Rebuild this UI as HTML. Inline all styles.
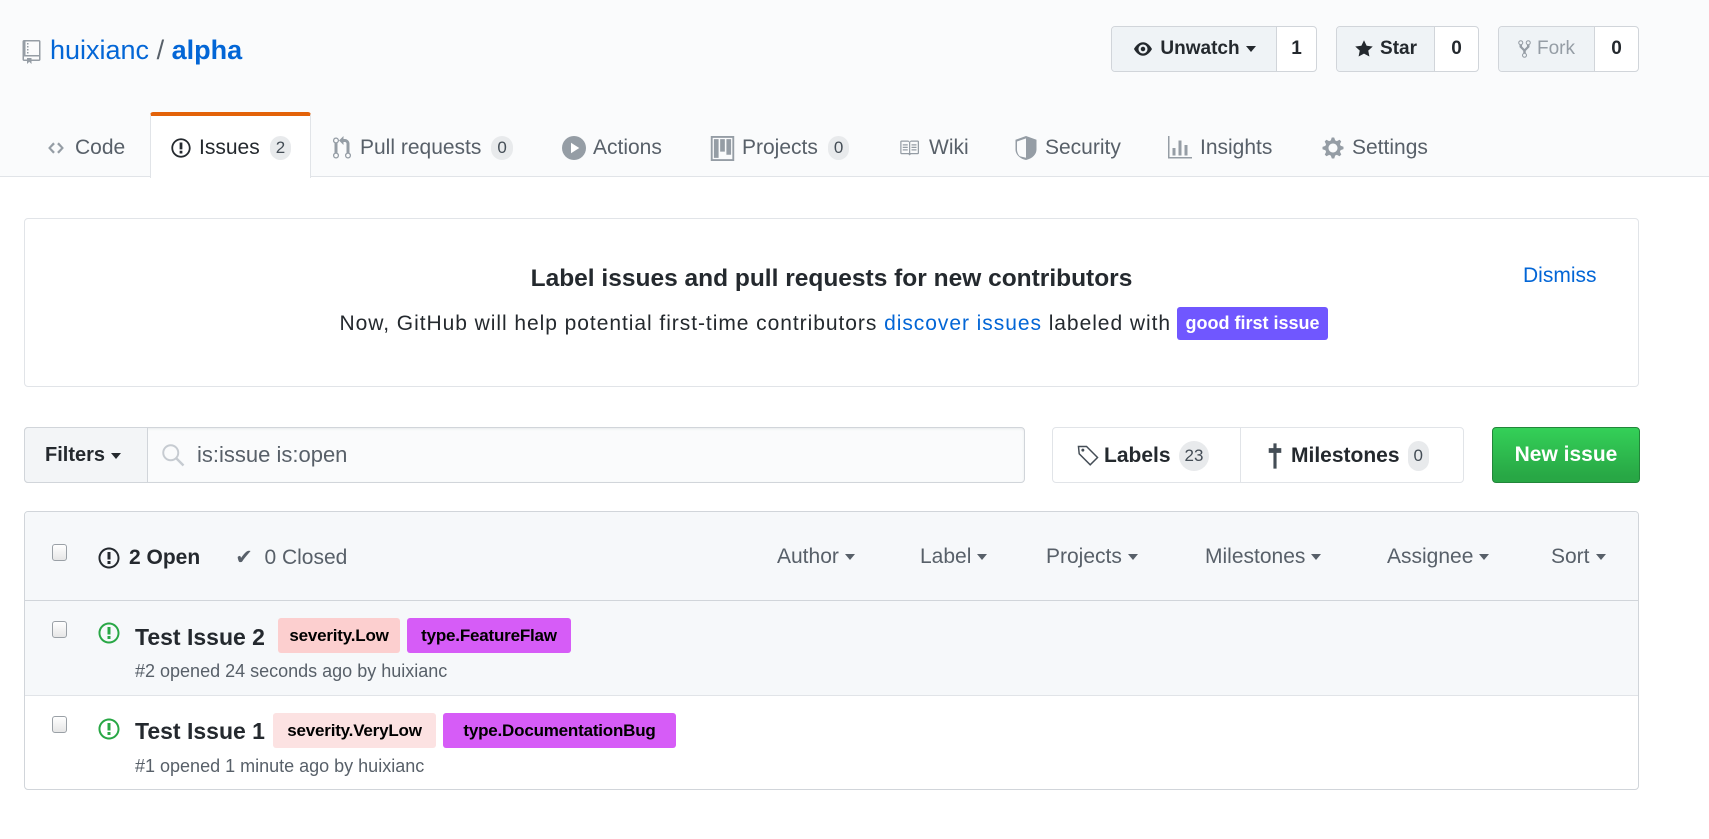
<!DOCTYPE html>
<html><head><meta charset="utf-8"><style>
*{box-sizing:border-box;margin:0;padding:0}
body{width:1709px;height:839px;background:#fff;font-family:"Liberation Sans",sans-serif;color:#24292e;position:relative;overflow:hidden}
.a{position:absolute;white-space:nowrap}
.hdr{position:absolute;left:0;top:0;width:1709px;height:177px;background:#fafbfc;border-bottom:1px solid #e1e4e8}
.btn{position:absolute;top:26px;height:46px;border:1px solid #d1d5da;border-radius:4px;background:#fff;display:flex;overflow:hidden}
.btn .l{background:#eff3f6;border-right:1px solid #d1d5da;display:flex;align-items:center;justify-content:center;font-weight:bold;font-size:19px;gap:6px}
.btn .r{flex:1;display:flex;align-items:center;justify-content:center;font-weight:bold;font-size:19px}
.tab{position:absolute;top:135px;height:26px;line-height:26px;font-size:21px;color:#586069;display:flex;align-items:center;gap:7px}
.cnt{display:inline-block;background:#e8eaec;border-radius:12px;font-size:17px;padding:0 6px;height:24px;line-height:24px;color:#444d56;margin-left:3px}
.lbl{position:absolute;height:35px;line-height:35px;font-size:17px;font-weight:bold;padding:0 6px;border-radius:3px;color:#000;text-align:center;letter-spacing:-0.2px}
.mt{font-size:18px;color:#586069}
.chk{position:absolute;width:15px;height:17px;border:1px solid #9aa0a6;border-radius:3px;background:linear-gradient(#fff,#e6e6e6)}
.caret{display:inline-block;width:0;height:0;border-left:5px solid transparent;border-right:5px solid transparent;border-top:6px solid currentColor;margin-left:6px;vertical-align:middle}
.flt{position:absolute;top:544px;font-size:21px;color:#586069;line-height:26px}
</style></head><body>
<div class="hdr"></div>
<svg class="a" style="left:22px;top:40px" width="19" height="24" viewBox="0 0 12 16"><path fill="#959da5" d="M4 9H3V8h1v1zm0-3H3v1h1V6zm0-2H3v1h1V4zm0-2H3v1h1V2zm8-1v12c0 .55-.45 1-1 1H6v2l-1.5-1.5L3 16v-2H1c-.55 0-1-.45-1-1V1c0-.55.45-1 1-1h10c.55 0 1 .45 1 1zm-1 10H1v2h2v-1h3v1h5v-2zm0-10H2v9h9V1z"/></svg>
<div class="a" style="left:50px;top:34px;font-size:27px;line-height:32px;color:#0366d6">huixianc <span style="color:#586069">/</span> <b>alpha</b></div>
<div class="btn" style="left:1111px;width:206px"><div class="l" style="width:165px"><svg width="22" height="18" viewBox="0 0 16 16"><path fill="#24292e" d="M8.06 2C3 2 0 8 0 8s3 6 8.06 6C13 14 16 8 16 8s-3-6-7.94-6zM8 12c-2.2 0-4-1.78-4-4 0-2.2 1.8-4 4-4 2.22 0 4 1.8 4 4 0 2.22-1.780 4-4 4zm2-4c0 1.11-.89 2-2 2-1.11 0-2-.89-2-2 0-1.11.89-2 2-2 1.11 0 2 .89 2 2z"/></svg>Unwatch<span class="caret" style="margin-left:0"></span></div><div class="r">1</div></div>
<div class="btn" style="left:1336px;width:143px"><div class="l" style="width:98px"><svg width="20" height="20" viewBox="0 0 14 16"><path fill="#24292e" d="M14 6l-4.9-.64L7 1 4.9 5.36 0 6l3.6 3.26L2.67 14 7 11.67 11.33 14l-.93-4.74L14 6z"/></svg>Star</div><div class="r">0</div></div>
<div class="btn" style="left:1498px;width:141px"><div class="l" style="width:96px;color:#959da5;font-weight:normal"><svg width="13" height="20" viewBox="0 0 10 16"><path fill="#959da5" d="M8 1a1.993 1.993 0 0 0-1 3.72V6L5 8 3 6V4.72A1.993 1.993 0 0 0 2 1a1.993 1.993 0 0 0-1 3.72V6.5l3 3v1.78A1.993 1.993 0 0 0 5 15a1.993 1.993 0 0 0 1-3.72V9.5l3-3V4.72A1.993 1.993 0 0 0 8 1zM2 4.2C1.34 4.2.8 3.65.8 3c0-.65.55-1.2 1.2-1.2.65 0 1.2.55 1.2 1.2 0 .65-.55 1.2-1.2 1.2zm3 10c-.66 0-1.2-.55-1.2-1.2 0-.65.55-1.2 1.2-1.2.65 0 1.2.55 1.2 1.2 0 .65-.55 1.2-1.2 1.2zm3-10c-.66 0-1.2-.55-1.2-1.2 0-.65.55-1.2 1.2-1.2.65 0 1.2.55 1.2 1.2 0 .65-.55 1.2-1.2 1.2z"/></svg>Fork</div><div class="r">0</div></div>
<div class="a" style="left:150px;top:112px;width:161px;height:66px;background:#fff;border:1px solid #e1e4e8;border-top:4px solid #e36209;border-bottom:none;border-radius:3px 3px 0 0"></div>
<div class="tab" style="left:44px"><svg width="24" height="18" viewBox="0 0 14 16"><path fill="#959da5" d="M9.5 3L8 4.5 11.5 8 8 11.5 9.5 13 14 8 9.5 3zm-5 0L0 8l4.5 5L6 11.5 2.5 8 6 4.5 4.5 3z"/></svg>Code</div>
<div class="tab" style="left:170px;color:#24292e"><svg width="22" height="22" viewBox="0 0 14 16"><path fill="#24292e" d="M7 2.3c3.14 0 5.7 2.56 5.7 5.7s-2.56 5.7-5.7 5.7A5.71 5.71 0 0 1 1.3 8c0-3.14 2.56-5.7 5.7-5.7zM7 1C3.14 1 0 4.14 0 8s3.14 7 7 7 7-3.14 7-7-3.14-7-7-7zm1 3H6v5h2V4zm0 6H6v2h2v-2z"/></svg>Issues<span class="cnt">2</span></div>
<div class="tab" style="left:331px"><svg width="22" height="24" viewBox="0 0 12 16"><path fill="#959da5" d="M11 11.28V5c-.03-.78-.34-1.47-.94-2.06C9.46 2.35 8.780 2.03 8 2H7V0L4 3l3 3V4h1c.27.02.48.11.69.31.21.2.3.42.31.69v6.28A1.993 1.993 0 0 0 10 15a1.993 1.993 0 0 0 1-3.72zm-1 2.92c-.66 0-1.2-.55-1.2-1.2 0-.65.55-1.2 1.2-1.2.65 0 1.2.55 1.2 1.2 0 .65-.55 1.2-1.2 1.2zM4 3c0-1.11-.89-2-2-2a1.993 1.993 0 0 0-1 3.72v6.56A1.993 1.993 0 0 0 2 15a1.993 1.993 0 0 0 1-3.72V4.72c.59-.34 1-.98 1-1.72zm-.8 10c0 .66-.55 1.2-1.2 1.2-.65 0-1.2-.55-1.2-1.2 0-.65.55-1.2 1.2-1.2.65 0 1.2.55 1.2 1.2zM2 4.2C1.34 4.2.8 3.65.8 3c0-.65.55-1.2 1.2-1.2.65 0 1.2.55 1.2 1.2 0 .65-.55 1.2-1.2 1.2z"/></svg>Pull requests<span class="cnt">0</span></div>
<div class="tab" style="left:562px"><svg width="24" height="24" viewBox="0 0 16 16"><circle cx="8" cy="8" r="8" fill="#959da5"/><path fill="#fff" d="M6 4.5v7l5.5-3.5z"/></svg>Actions</div>
<div class="tab" style="left:710px"><svg width="25" height="25" viewBox="0 0 15 16"><rect x="0.6" y="0.6" width="13.8" height="14.8" fill="none" stroke="#959da5" stroke-width="1.2"/><rect x="2" y="2" width="3" height="12" fill="#959da5"/><rect x="6" y="2" width="3" height="8" fill="#959da5"/><rect x="10" y="2" width="3" height="10" fill="#959da5"/></svg>Projects<span class="cnt">0</span></div>
<div class="tab" style="left:896px"><svg width="26" height="20" viewBox="0 0 16 16"><path fill="#959da5" d="M3 5h4v1H3V5zm0 3h4V7H3v1zm0 2h4V9H3v1zm11-5h-4v1h4V5zm0 2h-4v1h4V7zm0 2h-4v1h4V9zm2-6v9c0 .55-.45 1-1 1H9.5l-1 1-1-1H2c-.55 0-1-.45-1-1V3c0-.55.45-1 1-1h5.5l1 1 1-1H15c.55 0 1 .45 1 1zm-8 .5L7.5 3H2v9h6V3.5zm7-.5H9.5l-.5.5V12h6V3z"/></svg>Wiki</div>
<div class="tab" style="left:1014px"><svg width="24" height="28" viewBox="0 0 16 16"><path fill="#959da5" d="M4 13.5c-1-.6-2-2.6-2-4.5V3.7L8 1.6v12.9c-1.2-.3-3-.6-4-1zM8 0L1 2.5v6.5c0 3 2.5 6 7 7 4.5-1 7-4 7-7V2.5L8 0z"/></svg>Security</div>
<div class="tab" style="left:1167px"><svg width="26" height="24" viewBox="0 0 16 16"><path fill="#959da5" d="M16 14v1H0V0h1v14h15zM5 13H3V8h2v5zm4 0H7V3h2v10zm4 0h-2V6h2v7z"/></svg>Insights</div>
<div class="tab" style="left:1321px"><svg width="24" height="24" viewBox="0 0 14 16"><path fill="#959da5" d="M14 8.77v-1.6l-1.94-.64-.45-1.09.88-1.84-1.13-1.130-1.81.91-1.09-.45-.69-1.92h-1.6l-.63 1.94-1.11.45-1.84-.88-1.13 1.13.91 1.81-.45 1.09L0 7.23v1.59l1.94.64.45 1.09-.88 1.84 1.13 1.13 1.81-.91 1.09.45.69 1.92h1.59l.63-1.94 1.11-.45 1.84.88 1.13-1.13-.92-1.81.47-1.09L14 8.75v.02zM7 11c-1.66 0-3-1.34-3-3s1.34-3 3-3 3 1.34 3 3-1.34 3-3 3z"/></svg>Settings</div>
<div class="a" style="left:24px;top:218px;width:1615px;height:169px;border:1px solid #e1e4e8;border-radius:4px"></div>
<div class="a" style="left:24px;width:1615px;top:265px;text-align:center;font-size:24.5px;font-weight:bold;line-height:28px">Label issues and pull requests for new contributors</div>
<div class="a" style="left:335px;top:309px;font-size:21px;letter-spacing:0.95px;line-height:30px;width:836px;text-align:right">Now, GitHub will help potential first-time contributors <span style="color:#0366d6">discover issues</span> labeled with</div>
<div class="a" style="left:1177px;top:307px;width:151px;height:33px;line-height:33px;background:#7057ff;color:#fff;font-weight:bold;font-size:18px;text-align:center;border-radius:3px">good first issue</div>
<div class="a" style="left:1523px;top:263px;font-size:21px;color:#0366d6;line-height:26px">Dismiss</div>
<div class="a" style="left:24px;top:427px;width:1001px;height:56px;border:1px solid #d1d5da;border-radius:4px;background:#fafbfc;box-shadow:inset 0 1px 2px rgba(27,31,35,.075)"></div>
<div class="a" style="left:24px;top:427px;width:124px;height:56px;border:1px solid #d1d5da;border-radius:4px 0 0 4px;background:#f3f5f7;font-weight:bold;font-size:20px;line-height:54px;padding-left:20px;color:#24292e">Filters<span class="caret"></span></div>
<svg class="a" style="left:161px;top:442px" width="24" height="26" viewBox="0 0 16 16"><circle cx="6.5" cy="6.5" r="5" fill="none" stroke="#c6cbd1" stroke-width="1.3"/><path d="M10 10l5 5" stroke="#c6cbd1" stroke-width="1.6"/></svg>
<div class="a" style="left:197px;top:441px;font-size:22px;line-height:28px;color:#586069">is:issue is:open</div>
<div class="a" style="left:1052px;top:427px;width:412px;height:56px;border:1px solid #e1e4e8;border-radius:4px;background:#fff"></div>
<div class="a" style="left:1240px;top:428px;width:1px;height:54px;background:#e1e4e8"></div>
<div class="a" style="left:1077px;top:441px;font-size:21px;line-height:28px;font-weight:bold;display:flex;align-items:center;gap:5px;color:#24292e"><svg width="22" height="24" viewBox="0 0 15 16"><path fill="none" stroke="#444d56" stroke-width="1" d="M1 1.5h5.5l7.5 7.5-5 5L1.5 6.5z"/><circle cx="4" cy="4" r="1" fill="#444d56"/></svg>Labels<span class="cnt" style="font-weight:normal;height:30px;line-height:30px;border-radius:15px">23</span></div>
<div class="a" style="left:1264px;top:441px;font-size:21px;line-height:28px;font-weight:bold;display:flex;align-items:center;gap:5px;color:#24292e"><svg width="22" height="28" viewBox="0 0 14 16"><path fill="#444d56" d="M6 0h2v3h3v3H8v10H6V6H3V3h3z"/></svg>Milestones<span class="cnt" style="font-weight:normal;height:30px;line-height:30px;border-radius:15px">0</span></div>
<div class="a" style="left:1492px;top:427px;width:148px;height:56px;border-radius:4px;background:linear-gradient(#34d058,#28a745 90%);border:1px solid #22863a;color:#fff;font-weight:bold;font-size:21px;line-height:54px;text-align:center">New issue</div>
<div class="a" style="left:24px;top:511px;width:1615px;height:279px;border:1px solid #d1d5da;border-radius:4px;overflow:hidden">
 <div style="height:89px;background:#f6f8fa;border-bottom:1px solid #d1d5da"></div>
 <div style="height:95px;background:#f6f8fa;border-bottom:1px solid #e1e4e8"></div>
</div>
<div class="chk" style="left:52px;top:544px"></div>
<div class="a" style="left:98px;top:545px;font-size:21px;line-height:26px;display:flex;align-items:center;gap:9px"><svg width="22" height="24" viewBox="0 0 14 16"><path fill="#24292e" d="M7 2.3c3.14 0 5.7 2.56 5.7 5.7s-2.56 5.7-5.7 5.7A5.71 5.71 0 0 1 1.3 8c0-3.14 2.56-5.7 5.7-5.7zM7 1C3.14 1 0 4.14 0 8s3.14 7 7 7 7-3.14 7-7-3.14-7-7-7zm1 3H6v5h2V4zm0 6H6v2h2v-2z"/></svg><b>2 Open</b><span style="color:#586069;margin-left:26px">✔&nbsp; 0 Closed</span></div>
<div class="flt" style="left:777px">Author<span class="caret"></span></div>
<div class="flt" style="left:920px">Label<span class="caret"></span></div>
<div class="flt" style="left:1046px">Projects<span class="caret"></span></div>
<div class="flt" style="left:1205px">Milestones<span class="caret"></span></div>
<div class="flt" style="left:1387px">Assignee<span class="caret"></span></div>
<div class="flt" style="left:1551px">Sort<span class="caret"></span></div>
<div class="chk" style="left:52px;top:621px"></div>
<svg class="a" style="left:98px;top:621px" width="22" height="24" viewBox="0 0 14 16"><path fill="#28a745" d="M7 2.3c3.14 0 5.7 2.56 5.7 5.7s-2.56 5.7-5.7 5.7A5.71 5.71 0 0 1 1.3 8c0-3.14 2.56-5.7 5.7-5.7zM7 1C3.14 1 0 4.14 0 8s3.14 7 7 7 7-3.14 7-7-3.14-7-7-7zm1 3H6v5h2V4zm0 6H6v2h2v-2z"/></svg>
<div class="a" style="left:135px;top:622px;font-size:23px;line-height:30px;font-weight:bold;color:#24292e">Test Issue 2</div>
<div class="lbl" style="left:278px;top:618px;width:122px;background:#fccfcf">severity.Low</div>
<div class="lbl" style="left:407px;top:618px;width:164px;background:#d65cf7">type.FeatureFlaw</div>
<div class="a mt" style="left:135px;top:660px;line-height:22px">#2 opened 24 seconds ago by huixianc</div>
<div class="chk" style="left:52px;top:716px"></div>
<svg class="a" style="left:98px;top:717px" width="22" height="24" viewBox="0 0 14 16"><path fill="#28a745" d="M7 2.3c3.14 0 5.7 2.56 5.7 5.7s-2.56 5.7-5.7 5.7A5.71 5.71 0 0 1 1.3 8c0-3.14 2.56-5.7 5.7-5.7zM7 1C3.14 1 0 4.14 0 8s3.14 7 7 7 7-3.14 7-7-3.14-7-7-7zm1 3H6v5h2V4zm0 6H6v2h2v-2z"/></svg>
<div class="a" style="left:135px;top:716px;font-size:23px;line-height:30px;font-weight:bold;color:#24292e">Test Issue 1</div>
<div class="lbl" style="left:273px;top:713px;width:163px;background:#fce2e2">severity.VeryLow</div>
<div class="lbl" style="left:443px;top:713px;width:233px;background:#d65cf7">type.DocumentationBug</div>
<div class="a mt" style="left:135px;top:755px;line-height:22px">#1 opened 1 minute ago by huixianc</div>
</body></html>
